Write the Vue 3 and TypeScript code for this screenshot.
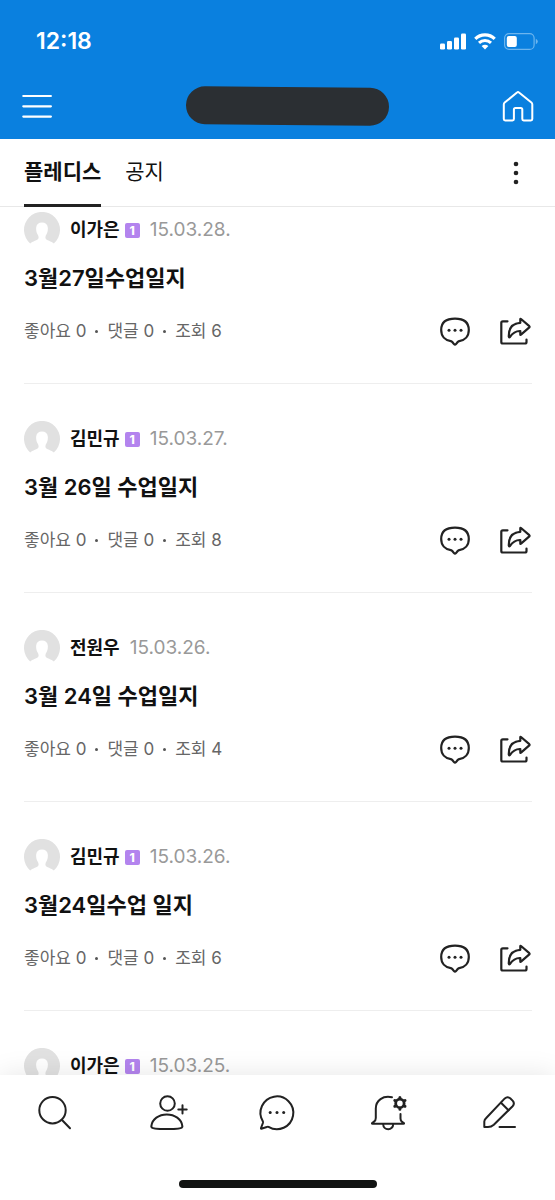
<script setup lang="ts">
import { ref } from 'vue'

interface Post {
  id: number
  author: string
  ranked: boolean
  date: string
  title?: string
  likes?: number
  comments?: number
  views?: number
}

const tabs = ['플레디스', '공지']
const activeTab = ref(0)

const posts: Post[] = [
  { id: 1, author: '이가은', ranked: true, date: '15.03.28.', title: '3월27일수업일지', likes: 0, comments: 0, views: 6 },
  { id: 2, author: '김민규', ranked: true, date: '15.03.27.', title: '3월 26일 수업일지', likes: 0, comments: 0, views: 8 },
  { id: 3, author: '전원우', ranked: false, date: '15.03.26.', title: '3월 24일 수업일지', likes: 0, comments: 0, views: 4 },
  { id: 4, author: '김민규', ranked: true, date: '15.03.26.', title: '3월24일수업 일지', likes: 0, comments: 0, views: 6 },
  { id: 5, author: '이가은', ranked: true, date: '15.03.25.' },
]
</script>

<template>
  <div class="app">
    <header class="header">
      <div class="status">
        <span class="clock">12:18</span>
        <div class="indicators">
          <svg width="26" height="17" viewBox="0 0 26 17" fill="#fff" aria-hidden="true">
            <rect x="0" y="10.500" width="5" height="6" rx="1.300" />
            <rect x="7" y="8" width="5" height="8.500" rx="1.300" />
            <rect x="14" y="4.500" width="5" height="12" rx="1.300" />
            <rect x="21" y="0.500" width="5" height="16" rx="1.300" />
          </svg>
          <svg width="22" height="17" viewBox="0 0 22 17" fill="none" stroke="#fff" aria-hidden="true">
            <path d="M1.300 5.800C6.600.500 15.400.500 20.700 5.800" stroke-width="3.200" />
            <path d="M5 9.900c3.400-3.200 8.600-3.200 12 0" stroke-width="3" />
            <path d="M11 16.500 7.600 13.100q3.400-2.700 6.800 0z" fill="#fff" stroke="none" />
          </svg>
          <svg width="34" height="17" viewBox="0 0 34 17" fill="none" aria-hidden="true">
            <rect x="0.600" y="0.600" width="29.500" height="15.800" rx="4.500" stroke="#6db5ee" stroke-width="1.200" />
            <rect x="2.800" y="3" width="10" height="11" rx="2" fill="#fff" />
            <path d="M31.800 5.800q2 1 2 2.700t-2 2.700z" fill="#6db5ee" />
          </svg>
        </div>
      </div>
      <div class="toolbar">
        <button class="icon-button" type="button" aria-label="메뉴">
          <svg width="36" height="36" viewBox="0 0 36 36" fill="none" stroke="#fff" stroke-width="2.200" stroke-linecap="round">
            <path d="M4.300 8h27.600M4.300 18.300h27.600M4.300 28.600h27.600" />
          </svg>
        </button>
        <div class="name-mask"></div>
        <button class="icon-button" type="button" aria-label="홈">
          <svg width="36" height="36" viewBox="0 0 36 36" fill="none" stroke="#fff" stroke-width="2" stroke-linejoin="round">
            <path d="M17 4.400q1-.900 2 0L31.400 14.600q.900.800.900 2V31q0 1.400-1.400 1.400h-7.200q-1.400 0-1.400-1.400V21.500q0-1.500-1.500-1.500h-5.400q-1.500 0-1.500 1.500V31q0 1.400-1.400 1.400H5.200Q3.800 32.400 3.800 31V16.600q0-1.200.9-2z" />
          </svg>
        </button>
      </div>
    </header>

    <nav class="tabs" aria-label="게시판">
      <button
        v-for="(tab, i) in tabs"
        :key="tab"
        type="button"
        class="tab"
        :class="{ active: i === activeTab }"
        @click="activeTab = i"
      >{{ tab }}</button>
      <button class="icon-button more" type="button" aria-label="더보기">
        <svg width="36" height="36" viewBox="0 0 36 36" fill="#222" aria-hidden="true">
          <circle cx="18" cy="9" r="2.300" />
          <circle cx="18" cy="18" r="2.300" />
          <circle cx="18" cy="27" r="2.300" />
        </svg>
      </button>
    </nav>

    <main class="feed">
      <article v-for="post in posts" :key="post.id" class="post">
        <div class="byline">
          <svg class="avatar" width="36" height="36" viewBox="0 0 36 36" aria-hidden="true">
            <path fill="#e1e1e1" d="M6.200 31.500A18 18 0 1 1 29.800 31.500C27.800 29 22 28.500 21.500 26.200C21.200 24.600 21.700 23.600 22.500 22.300C23.600 20.300 24 18 23.800 15.500C23.500 12.300 21.200 10.500 18 10.500S12.500 12.300 12.200 15.500C12 18 12.400 20.300 13.500 22.300C14.300 23.600 14.800 24.600 14.500 26.200C14 28.500 8.200 29 6.200 31.500z" />
          </svg>
          <span class="author">{{ post.author }}</span>
          <span v-if="post.ranked" class="rank">1</span>
          <time class="date">{{ post.date }}</time>
        </div>
        <template v-if="post.title">
          <h2 class="title">{{ post.title }}</h2>
          <div class="footer">
            <p class="stats">
              <span>좋아요 {{ post.likes }}</span>
              <i class="dot"></i>
              <span>댓글 {{ post.comments }}</span>
              <i class="dot"></i>
              <span>조회 {{ post.views }}</span>
            </p>
            <div class="actions">
              <button class="icon-button" type="button" aria-label="댓글">
                <svg width="36" height="36" viewBox="0 0 36 36" fill="none" stroke="#222" stroke-width="2.200" stroke-linejoin="round">
                  <path d="M19 5.700C28 5.700 32.800 9.800 32.800 17C32.800 23.200 29 27.300 23.200 28.100Q22.300 28.300 21.700 29L20 31.100Q19 32.200 18 31.100L16.300 29Q15.700 28.300 14.800 28.100C9 27.300 5.200 23.200 5.200 17C5.200 9.800 10 5.700 19 5.700z" />
                  <g fill="#222" stroke="none">
                    <circle cx="13" cy="17.200" r="1.500" />
                    <circle cx="19" cy="17.200" r="1.500" />
                    <circle cx="25" cy="17.200" r="1.500" />
                  </g>
                </svg>
              </button>
              <button class="icon-button" type="button" aria-label="공유">
                <svg width="36" height="36" viewBox="0 0 36 36" fill="none" stroke="#222" stroke-width="2.200" stroke-linecap="round" stroke-linejoin="round">
                  <path d="M11.500 8.300H6.800Q5.300 8.300 5.300 9.800V29q0 1.500 1.500 1.500H29q1.500 0 1.500-1.500V26.500" />
                  <path d="M24.300 6.200Q24.300 5.400 25 6L33.300 13.200Q33.900 13.800 33.300 14.400L25 21.700Q24.300 22.200 24.300 21.400V18C20 17.800 16.800 19.700 14 24Q13 25 12.800 23.700C12.600 15.500 16 10.300 24.300 9.800z" />
                </svg>
              </button>
            </div>
          </div>
        </template>
      </article>
    </main>

    <footer class="bottom">
      <nav class="bottom-nav" aria-label="주요 메뉴">
        <button type="button" aria-label="검색">
          <svg class="glyph" viewBox="1 0 40 40">
            <circle cx="17.500" cy="17.200" r="13.200" />
            <path d="m27 27 8 8.200" />
          </svg>
        </button>
        <button type="button" aria-label="멤버 초대">
          <svg class="glyph" viewBox="1 0 40 40">
            <circle cx="21.500" cy="10.500" r="7.300" />
            <path d="M5.300 33.400C6 26 13 21.500 20.800 21.500S35.700 26 36.400 33.400C36.400 35.400 31.500 36 20.800 36S5.300 35.400 5.300 33.400z" />
            <path d="M36.500 12.200v8.400M32.300 16.400h8.400" />
          </svg>
        </button>
        <button type="button" aria-label="채팅">
          <svg class="glyph" viewBox="1 0 40 40">
            <path d="M5.800 28.200A16.400 16.400 0 1 1 11.500 33.900Q10.700 33.500 9.800 34L4.300 35.700Q3.800 35.800 4 35.100L5.900 30Q6.200 29 5.800 28.200z" />
            <g class="solid">
              <circle cx="13.200" cy="19.500" r="1.500" />
              <circle cx="20" cy="19.500" r="1.500" />
              <circle cx="26.700" cy="19.500" r="1.500" />
            </g>
          </svg>
        </button>
        <button type="button" aria-label="알림 설정">
          <svg class="glyph" viewBox="1 0 40 40">
            <path d="M24 4.300C15 2.200 7.800 7.500 7.800 15.500V25Q7.800 27.500 6 28.600L4.200 30Q3.500 30.700 4.500 30.700H35.500Q36.500 30.700 35.800 30L33.800 28.600Q32.500 27.500 32.500 25.500V21" />
            <path d="M15.200 31.200a5 5 0 0 0 10 0" />
            <circle cx="31.900" cy="10.400" r="4.200" stroke-width="2.800" />
            <path class="cog" d="M31.900 5V4.600M31.900 16.200v-.4M27.200 7.700l-.4-.2M37 13.300l-.4-.2M27.200 13.100l-.4.2M37 7.500l-.4.2" />
          </svg>
        </button>
        <button type="button" aria-label="글쓰기">
          <svg class="glyph" viewBox="1 0 40 40">
            <path d="M5.300 34V28.500Q5.500 26.700 7 25.200L25.800 5.400Q28.400 3 31.200 5.300L33.800 7.900Q36 10.600 33.600 13.200L14.800 31.700Q12.300 34 9 34z" />
            <path d="m22 9.700 7.500 7.500M20.500 34H36" />
          </svg>
        </button>
      </nav>
      <div class="home-indicator"></div>
    </footer>
  </div>
</template>

<style>
body {
  margin: 0;
  background: #fff;
}
</style>

<style scoped>
.app {
  display: flex;
  flex-direction: column;
  height: 100vh;
  overflow: hidden;
  background: #fff;
  color: #111;
  font-family: Inter, "Noto Sans CJK KR", sans-serif;
}

button {
  margin: 0;
  padding: 0;
  border: 0;
  background: none;
  color: inherit;
  font: inherit;
  cursor: pointer;
}

svg {
  display: block;
}

.header {
  flex: none;
  background: #0a80df;
}

.status {
  display: flex;
  align-items: center;
  justify-content: space-between;
  height: 34px;
  padding: 24px 17px 0 36px;
}

.clock {
  color: #fff;
  font-size: 23px;
  font-weight: 600;
}

.indicators {
  display: flex;
  gap: 8px;
}

.toolbar {
  display: flex;
  align-items: center;
  justify-content: space-between;
  padding: 29px 19px 14px;
}

.icon-button {
  flex: none;
  width: 36px;
  height: 36px;
}

.name-mask {
  width: 203px;
  height: 38px;
  margin-left: 20px;
  border-radius: 19px;
  background: #2b2f33;
  transform: rotate(0.5deg);
}

.tabs {
  display: flex;
  flex: none;
  align-items: stretch;
  gap: 24px;
  height: 67px;
  padding: 0 21px 0 24px;
  border-bottom: 1px solid #e8e8e8;
}

.tab {
  height: 68px;
  box-sizing: border-box;
  border-bottom: 3px solid transparent;
  font-size: 21px;
  line-height: 66px;
}

.tab.active {
  border-color: #222;
  font-weight: 700;
}

.more {
  align-self: center;
  margin-left: auto;
}

.feed {
  flex: 1;
  min-height: 0;
  overflow: hidden;
}

.post {
  margin: 0 23px 0 24px;
  padding: 37px 0 34px;
  border-bottom: 1px solid #eee;
}

.post:first-child {
  padding-top: 5px;
}

.byline {
  display: flex;
  align-items: center;
  height: 36px;
}

.author {
  margin-left: 10px;
  font-size: 18px;
  font-weight: 700;
  line-height: 20px;
}

.rank {
  width: 15px;
  height: 15px;
  margin-left: 5px;
  border-radius: 2px;
  background: #b384ee;
  color: #fff;
  font-size: 12px;
  font-weight: 800;
  line-height: 15px;
  text-align: center;
}

.date {
  margin-left: 10px;
  color: #999;
  font-size: 19px;
  line-height: 20px;
}

.title {
  height: 32px;
  margin: 14px 0 19px;
  font-size: 22px;
  font-weight: 600;
  line-height: 32px;
}

.footer,
.stats,
.actions {
  display: flex;
  align-items: center;
}

.footer {
  justify-content: space-between;
}

.stats {
  gap: 9px;
  margin: 0;
  color: #666;
  font-size: 17px;
  line-height: 24px;
}

.dot {
  width: 3px;
  height: 3px;
  border-radius: 50%;
  background: #555;
}

.actions {
  gap: 24px;
}

.bottom {
  z-index: 1;
  flex: none;
  background: #fff;
  box-shadow: 0 0 26px rgba(0, 0, 0, 0.1);
}

.bottom-nav {
  display: grid;
  grid-template-columns: repeat(5, 1fr);
  padding-top: 18px;
}

.bottom-nav button {
  display: flex;
  justify-content: center;
}

.glyph {
  width: 40px;
  height: 40px;
  overflow: visible;
  fill: none;
  stroke: #222;
  stroke-width: 2;
  stroke-linecap: round;
  stroke-linejoin: round;
}

.glyph .solid {
  fill: #222;
  stroke: none;
}

.glyph .cog {
  stroke-width: 3;
}

.home-indicator {
  width: 198px;
  height: 8px;
  margin: 47px auto 12px;
  border-radius: 4px;
  background: #111312;
}
</style>
